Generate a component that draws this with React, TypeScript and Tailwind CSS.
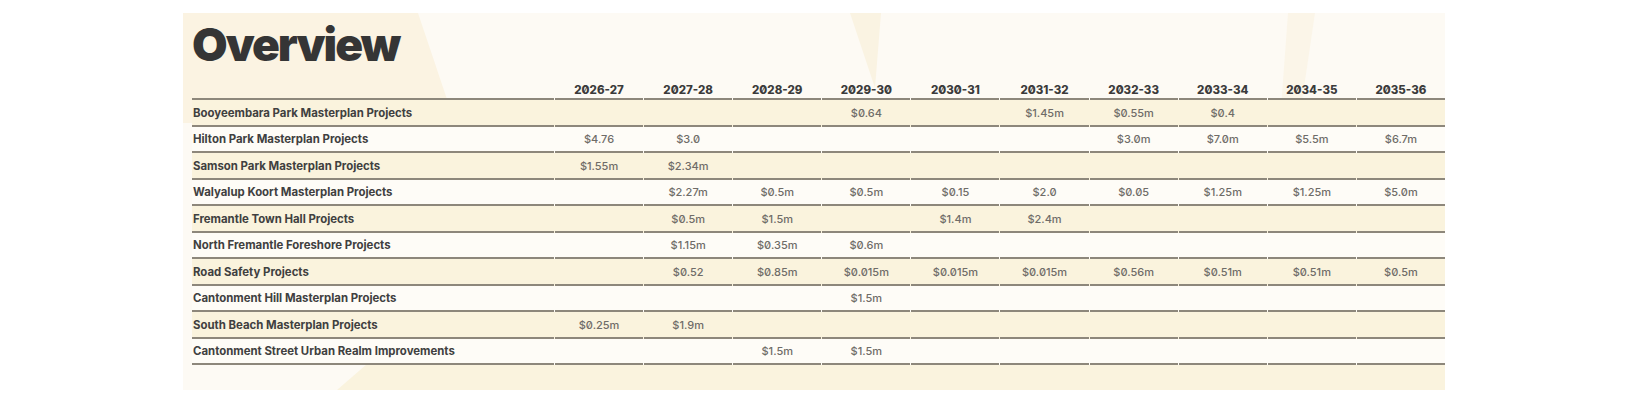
const years = [
  "2026-27",
  "2027-28",
  "2028-29",
  "2029-30",
  "2030-31",
  "2031-32",
  "2032-33",
  "2033-34",
  "2034-35",
  "2035-36",
];

const rows: { name: string; values: string[] }[] = [
  { name: "Booyeembara Park Masterplan Projects", values: ["", "", "", "$0.64", "", "$1.45m", "$0.55m", "$0.4", "", ""] },
  { name: "Hilton Park Masterplan Projects", values: ["$4.76", "$3.0", "", "", "", "", "$3.0m", "$7.0m", "$5.5m", "$6.7m"] },
  { name: "Samson Park Masterplan Projects", values: ["$1.55m", "$2.34m", "", "", "", "", "", "", "", ""] },
  { name: "Walyalup Koort Masterplan Projects", values: ["", "$2.27m", "$0.5m", "$0.5m", "$0.15", "$2.0", "$0.05", "$1.25m", "$1.25m", "$5.0m"] },
  { name: "Fremantle Town Hall Projects", values: ["", "$0.5m", "$1.5m", "", "$1.4m", "$2.4m", "", "", "", ""] },
  { name: "North Fremantle Foreshore Projects", values: ["", "$1.15m", "$0.35m", "$0.6m", "", "", "", "", "", ""] },
  { name: "Road Safety Projects", values: ["", "$0.52", "$0.85m", "$0.015m", "$0.015m", "$0.015m", "$0.56m", "$0.51m", "$0.51m", "$0.5m"] },
  { name: "Cantonment Hill Masterplan Projects", values: ["", "", "", "$1.5m", "", "", "", "", "", ""] },
  { name: "South Beach Masterplan Projects", values: ["$0.25m", "$1.9m", "", "", "", "", "", "", "", ""] },
  { name: "Cantonment Street Urban Realm Improvements", values: ["", "", "$1.5m", "$1.5m", "", "", "", "", "", ""] },
];

function Backdrop() {
  return (
    <svg className="absolute inset-0 w-full h-full" viewBox="0 0 1262 377" preserveAspectRatio="none">
      <polygon points="0,0 235,0 272,110 0,110" fill="#fbf3e2" />
      <polygon points="667,0 698,0 692,75" fill="#faf3e2" />
      <polygon points="1105,0 1132,0 1118,95 1098,95" fill="#fbf5e8" />
      <polygon points="184,351 1262,351 1262,377 154,377" fill="#faf3de" />
    </svg>
  );
}

export default function App() {
  return (
    <div className="w-[1648px] h-[411px] bg-white font-['Inter',sans-serif]">
      <div className="relative ml-[183px] pt-[13px] w-[1262px]">
        <div className="relative h-[377px] bg-[#fdfaf4] pl-[9px] overflow-hidden">
          <Backdrop />
          <div className="relative">
            {/* Title */}
            <h1 className="mt-[8px] h-[46px] text-[46px] leading-[46px] font-black tracking-[-2px] text-[#353535]">
              Overview
            </h1>

            {/* Header */}
            <div className="grid grid-cols-[362px_repeat(10,minmax(0,1fr))] gap-x-px h-[33px]">
              <div className="border-b-2 border-[#8d877b]" />
              {years.map((y) => (
                <div
                  key={y}
                  className="flex items-end justify-center pb-[1px] border-b-2 border-[#8d877b] text-[11.5px] leading-[14px] font-extrabold text-[#3b3b3b] slashed-zero"
                >
                  {y}
                </div>
              ))}
            </div>

            {/* Rows */}
            {rows.map((row, i) => (
              <div
                key={row.name}
                className={`grid grid-cols-[362px_repeat(10,minmax(0,1fr))] gap-x-px h-[26.5px] ${
                  i % 2 === 0 ? "bg-[#faf3dd]" : "bg-[#fefcf7]"
                }`}
              >
                <div className="flex items-center pl-px pt-px border-b-2 border-[#8d877b] text-[11.4px] leading-[14px] font-bold text-[#404040]">
                  {row.name}
                </div>
                {row.values.map((v, j) => (
                  <div
                    key={j}
                    className="flex items-center justify-center pt-px border-b-2 border-[#8d877b] text-[11px] leading-[14px] font-medium text-[#6f6c68] slashed-zero"
                  >
                    {v}
                  </div>
                ))}
              </div>
            ))}
          </div>
        </div>
      </div>
    </div>
  );
}
